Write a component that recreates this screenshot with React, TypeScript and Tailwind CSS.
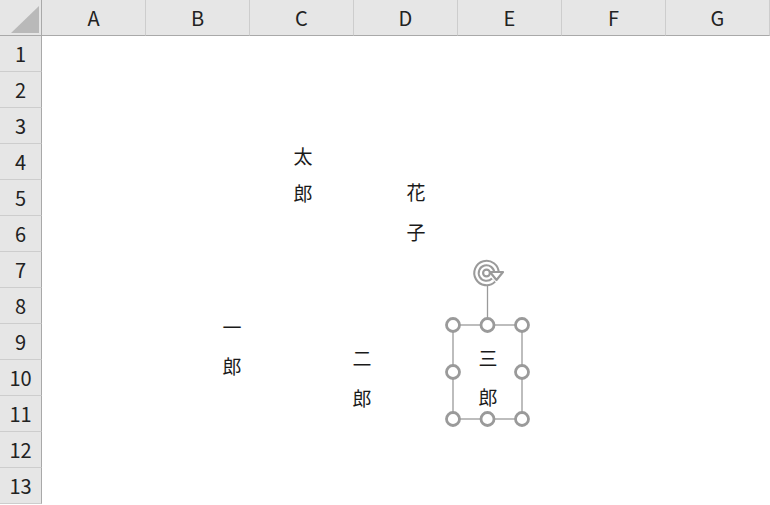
const columns = ['A', 'B', 'C', 'D', 'E', 'F', 'G'];
const rows = Array.from({ length: 13 }, (_, i) => i + 1);

type Label = { chars: [string, string]; x: number; y: number; gap: number };

// x = centre of the glyph column, y = top of the first line box
const labels: Label[] = [
  { chars: ['太', '郎'], x: 303, y: 137, gap: 37 },
  { chars: ['花', '子'], x: 416, y: 172, gap: 40 },
  { chars: ['一', '郎'], x: 232, y: 307, gap: 39 },
  { chars: ['二', '郎'], x: 362, y: 338, gap: 40 },
  { chars: ['三', '郎'], x: 488, y: 338, gap: 39 },
];

function TextShape({ chars, x, y, gap }: Label) {
  return (
    <div
      className="absolute flex w-10 flex-col items-center text-[19px] text-[#1a1a1a]"
      style={{ left: x - 20, top: y, lineHeight: `${gap}px` }}
    >
      <span>{chars[0]}</span>
      <span>{chars[1]}</span>
    </div>
  );
}

function SelectionFrame() {
  // frame corners in page coords: (453,325) – (522,419); svg origin at (438,255)
  const left = 15;
  const top = 70;
  const right = 84;
  const bottom = 164;
  const midX = (left + right) / 2;
  const midY = (top + bottom) / 2;
  const handles = [
    [left, top], [midX, top], [right, top],
    [left, midY], [right, midY],
    [left, bottom], [midX, bottom], [right, bottom],
  ];
  const cx = midX - 1;
  const cy = 18;
  const r = 10;
  const arc = `M ${cx + r * Math.cos(Math.PI / 4)} ${cy + r * Math.sin(Math.PI / 4)} A ${r} ${r} 0 1 1 ${cx + r} ${cy}`;
  return (
    <svg className="absolute left-[438px] top-[255px]" width="100" height="180" viewBox="0 0 100 180">
      <line x1={midX} y1={cy + 13} x2={midX} y2={top} stroke="#9a9a9a" strokeWidth="1.3" />
      <rect x={left} y={top} width={right - left} height={bottom - top} fill="none" stroke="#9a9a9a" strokeWidth="1.3" />
      <path d={arc} fill="none" stroke="#9a9a9a" strokeWidth="6.5" />
      <path d={arc} fill="none" stroke="#ffffff" strokeWidth="2.4" />
      <path d={`M ${cx + r - 6.5} ${cy - 1} L ${cx + r + 6.5} ${cy - 1} L ${cx + r} ${cy + 7} Z`} fill="#ffffff" stroke="#9a9a9a" strokeWidth="2.2" strokeLinejoin="round" />
      <circle cx={cx} cy={cy} r={3.4} fill="none" stroke="#9a9a9a" strokeWidth="2.2" />
      {handles.map(([hx, hy], i) => (
        <circle key={i} cx={hx} cy={hy} r="6.5" fill="#ffffff" stroke="#9a9a9a" strokeWidth="2.8" />
      ))}
    </svg>
  );
}

export default function App() {
  return (
    <div
      className="relative h-[505px] w-[770px] overflow-hidden bg-white"
      style={{ fontFamily: '"Noto Sans CJK JP", "Noto Sans", sans-serif' }}
    >
      <div className="grid grid-cols-[42px_repeat(7,104px)] grid-rows-[36px_repeat(13,36px)]">
        <div className="relative border-b border-r border-[#a9a9a9] bg-[#e6e6e6]">
          <svg className="absolute inset-0" width="42" height="36" viewBox="0 0 42 36">
            <polygon points="11,33 39,33 39,6" fill="#b9b9b9" />
          </svg>
        </div>
        {columns.map((col) => (
          <div
            key={col}
            className="flex items-center justify-center border-b border-r border-b-[#a9a9a9] border-r-[#cdcdcd] bg-[#e6e6e6] text-[20px] text-[#222]"
          >
            {col}
          </div>
        ))}
        {rows.map((row) => (
          <div key={row} className="contents">
            <div className="flex items-center justify-center border-b border-r border-b-[#cdcdcd] border-r-[#a9a9a9] bg-[#e6e6e6] text-[20px] text-[#222]">
              {row}
            </div>
            {columns.map((col) => (
              <div key={col} className="bg-white" />
            ))}
          </div>
        ))}
      </div>
      {labels.map((label) => (
        <TextShape key={label.chars.join('') + label.x} {...label} />
      ))}
      <SelectionFrame />
    </div>
  );
}
